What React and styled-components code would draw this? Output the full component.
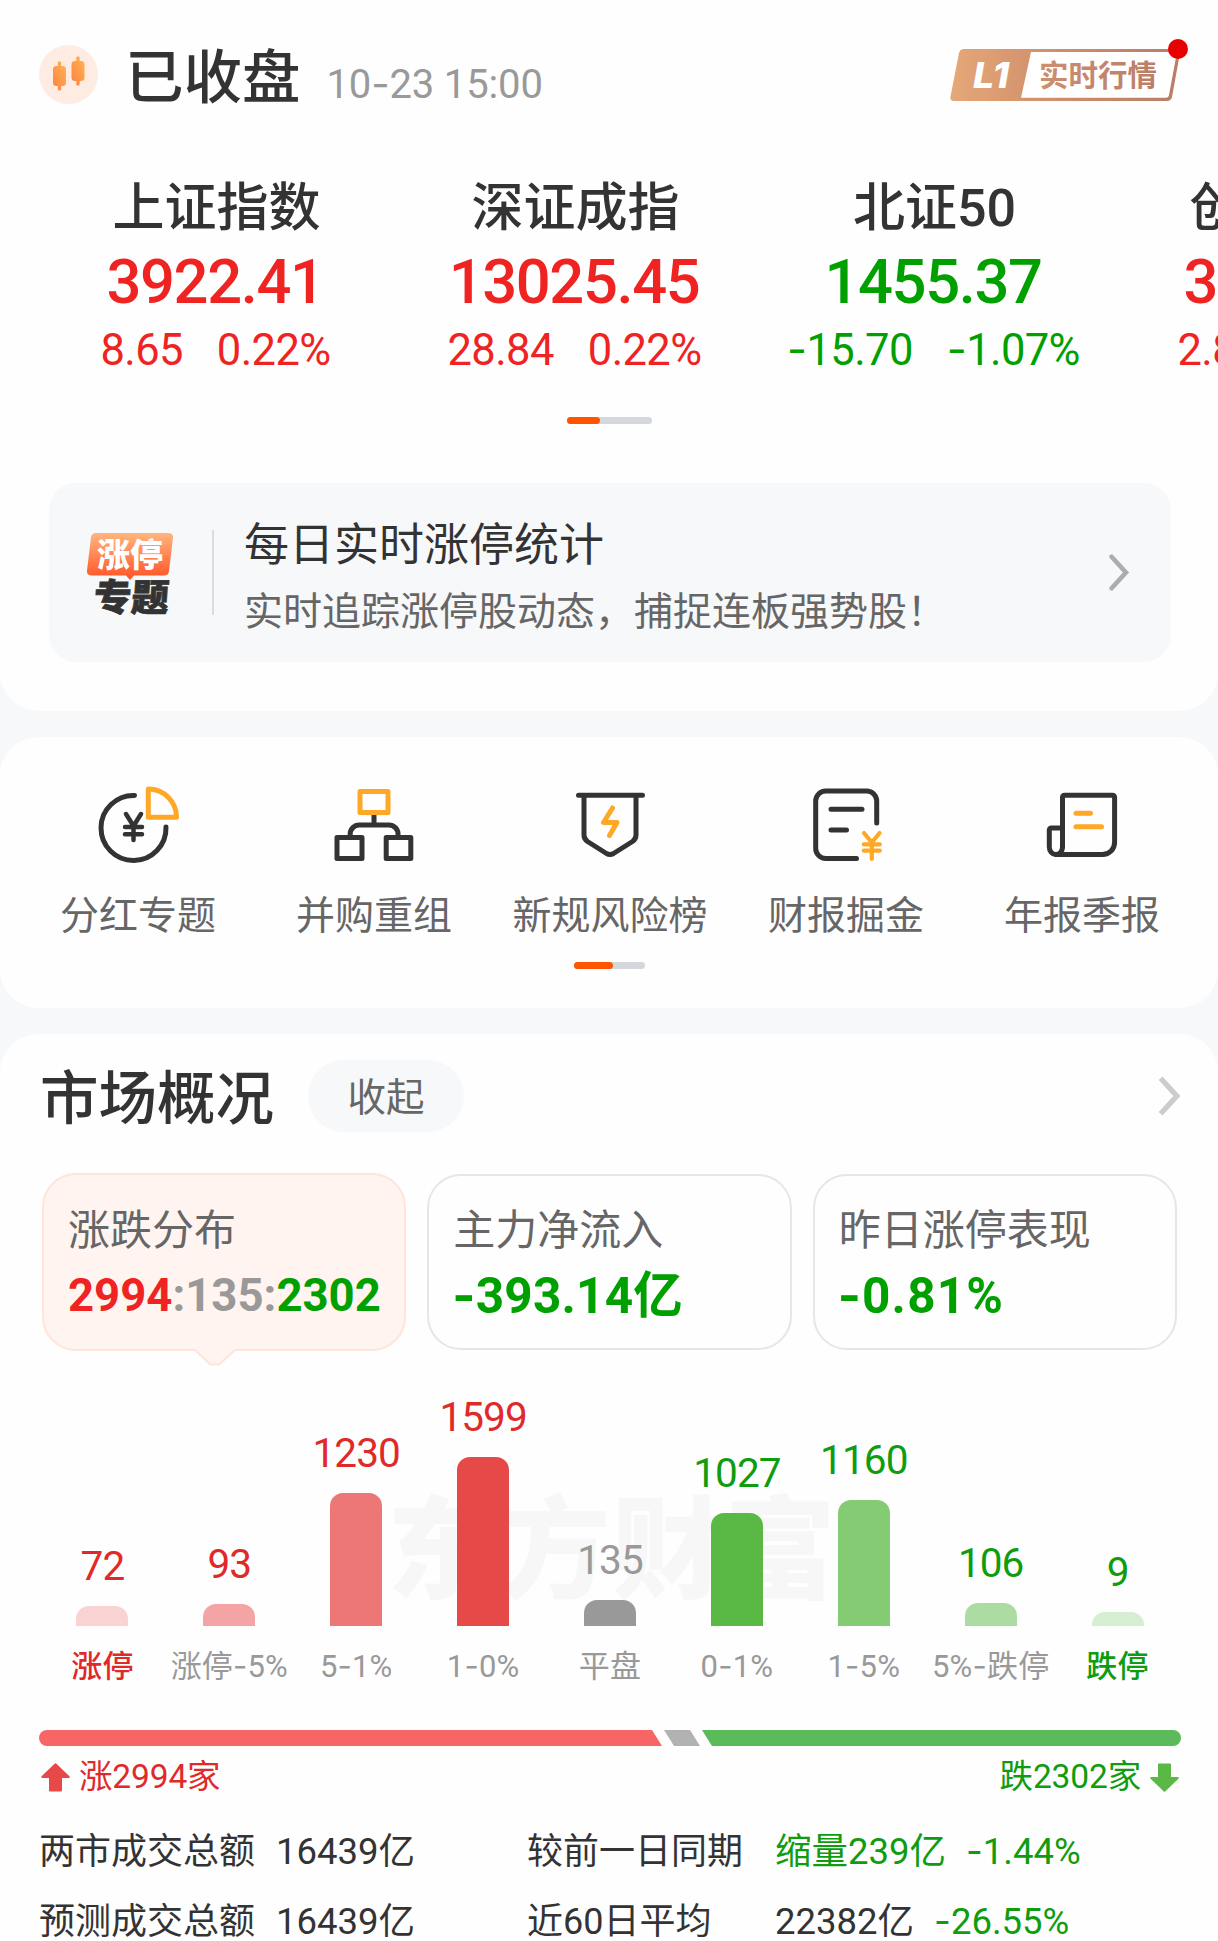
import React from 'react'
import styled, { createGlobalStyle } from 'styled-components'

const RED = '#f02323'
const GREEN = '#00a000'

const indexes = [
  { name: '上证指数', value: '3922.41', diff: '8.65', rate: '0.22%', up: true },
  { name: '深证成指', value: '13025.45', diff: '28.84', rate: '0.22%', up: true },
  { name: '北证50', value: '1455.37', diff: '-15.70', rate: '-1.07%', up: false },
  { name: '创业板指', value: '3062.16', diff: '2.84', rate: '0.09%', up: true },
]

const bars = [
  { label: '涨停', value: 72, height: 20, color: '#f9d2d2', text: '#e02a2a', strong: true },
  { label: '涨停-5%', value: 93, height: 22, color: '#f4a4a4', text: '#e02a2a' },
  { label: '5-1%', value: 1230, height: 133, color: '#ed7676', text: '#e02a2a' },
  { label: '1-0%', value: 1599, height: 169, color: '#e74848', text: '#e02a2a' },
  { label: '平盘', value: 135, height: 26, color: '#999999', text: '#999999' },
  { label: '0-1%', value: 1027, height: 113, color: '#5ab944', text: '#0f9c0f' },
  { label: '1-5%', value: 1160, height: 126, color: '#84cb74', text: '#0f9c0f' },
  { label: '5%-跌停', value: 106, height: 23, color: '#addca2', text: '#0f9c0f' },
  { label: '跌停', value: 9, height: 14, color: '#d6eed1', text: '#0f9c0f', strong: true },
]

const Num = ({ children }) => (
  <>
    {String(children).split(/(-)/).map((part, i) => (
      part === '-' ? <Hyphen key={i}>-</Hyphen> : part
    ))}
  </>
)

const DividendIcon = () => (
  <Icon viewBox="0 0 100 100">
    <path d="M46.5 19.5A32.5 32.5 0 1 0 78 51" />
    <path d="M38 38l7.5 12 7.5-12M45.5 50v14M37 51h17M37 58.3h17" strokeWidth="4.5" />
    <path d="M60.3 13v28.2h28.2A28.2 28.2 0 0 0 60.3 13z" stroke="#ffa726" />
  </Icon>
)

const MergeIcon = () => (
  <Icon viewBox="0 0 100 100">
    <path d="M50 38v11M26.2 60v-2a9 9 0 0 1 9-9H65a9 9 0 0 1 9 9v2" strokeLinecap="butt" />
    <rect x="13" y="61.5" width="25" height="21" />
    <rect x="62.2" y="61.5" width="24.6" height="21" />
    <rect x="36" y="15.5" width="28" height="21" stroke="#ffa726" />
  </Icon>
)

const RiskIcon = () => (
  <Icon viewBox="0 0 100 100">
    <path d="M18.5 19.3h64M24 19.3V59q0 4 3.5 6.5l19 12q3.5 2 7 0l19-12q3.5-2.5 3.5-6.5V19.3" />
    <path d="M52.5 32L43.5 46.5H57L49.5 59.5" stroke="#ffa726" />
  </Icon>
)

const ReportIcon = () => (
  <Icon viewBox="0 0 100 100">
    <path d="M80.7 47V25a10 10 0 0 0-10-10h-41a10 10 0 0 0-10 10v47.5a10 10 0 0 0 10 10h30.8" />
    <path d="M35 33.3h31M35 54h15.5" />
    <path d="M68 57l7.8 9.5 7.8-9.5M75.8 66.5V83M67.8 68.3h16M67.8 74.7h16" stroke="#ffa726" strokeWidth="4.2" />
  </Icon>
)

const AnnualIcon = () => (
  <Icon viewBox="0 0 100 100">
    <path d="M30.5 71V21.3a2 2 0 0 1 2-2h48.1a2 2 0 0 1 2 2v45.2a12 12 0 0 1-12 12H24" />
    <path d="M30.5 52H19.3a2 2 0 0 0-2 2v17a6.6 7.5 0 0 0 13.2 0" />
    <path d="M44 37.3h14.5M44 50.7h25.5" stroke="#ffa726" />
  </Icon>
)

const tools = [
  { label: '分红专题', icon: DividendIcon },
  { label: '并购重组', icon: MergeIcon },
  { label: '新规风险榜', icon: RiskIcon },
  { label: '财报掘金', icon: ReportIcon },
  { label: '年报季报', icon: AnnualIcon },
]

const CandleLogo = () => (
  <svg width="59" height="59" viewBox="0 0 59 59">
    <defs>
      <linearGradient id="candle" x1="0" y1="1" x2="1" y2="0">
        <stop offset="0" stopColor="#ff7f45" />
        <stop offset="1" stopColor="#ffb752" />
      </linearGradient>
    </defs>
    <circle cx="29.5" cy="29.5" r="29.5" fill="#feece3" />
    <g fill="url(#candle)">
      <path d="M17.5 21h1.3v-3a1.7 1.7 0 0 1 3.4 0v3h1.3a3.5 3.5 0 0 1 3.5 3.5v13a3.5 3.5 0 0 1-3.5 3.5h-1.3v3a1.7 1.7 0 0 1-3.4 0v-3h-1.3a3.5 3.5 0 0 1-3.5-3.5v-13a3.5 3.5 0 0 1 3.5-3.5z" />
      <path d="M36 16h1.3v-3a1.7 1.7 0 0 1 3.4 0v3H42a3.5 3.5 0 0 1 3.5 3.5v13A3.5 3.5 0 0 1 42 36h-1.3v3a1.7 1.7 0 0 1-3.4 0v-3H36a3.5 3.5 0 0 1-3.5-3.5v-13A3.5 3.5 0 0 1 36 16z" />
    </g>
  </svg>
)

const LevelBadge = () => (
  <svg width="240" height="64" viewBox="0 0 240 64">
    <defs>
      <linearGradient id="level" x1="0" y1="0" x2="1" y2="0">
        <stop offset="0" stopColor="#e5a878" />
        <stop offset="0.38" stopColor="#d2926d" />
        <stop offset="1" stopColor="#b97c67" />
      </linearGradient>
      <linearGradient id="levelText" x1="0" y1="0" x2="1" y2="0">
        <stop offset="0" stopColor="#cd8f6e" />
        <stop offset="1" stopColor="#bb7d67" />
      </linearGradient>
    </defs>
    <path d="M14 10h213q4 0 3 4l-8 44q-1 4-5 4H4q-4.5 0-3.5-4.5L9 14q1-4 5-4z" fill="url(#level)" />
    <path d="M81 13h146l-8 43q-.5 2.8-3 2.8H71z" fill="#fff" />
    <text x="23" y="49" fontSize="36" fontWeight="800" fontStyle="italic" fontFamily="Inter, sans-serif" fill="#fff" textLength="36" lengthAdjust="spacingAndGlyphs">L1</text>
    <text x="89" y="47" fontSize="29.5" fontWeight="700" fontFamily="'Noto Sans CJK SC', sans-serif" fill="url(#levelText)">实时行情</text>
    <circle cx="228" cy="10" r="10" fill="#e80000" />
  </svg>
)

const TopicLogo = () => (
  <svg width="86" height="84" viewBox="0 0 86 84">
    <defs>
      <linearGradient id="topic" x1="0" y1="0" x2="0" y2="1">
        <stop offset="0" stopColor="#ffb67e" />
        <stop offset="1" stopColor="#ff5226" />
      </linearGradient>
    </defs>
    <path d="M9 2h72q5.5 0 5 5l-4 33q-.5 4.5-5 4.5H47L43 49l-4-4.500H5q-5.500 0-5-5L4 6.500Q4.500 2 9 2z" fill="url(#topic)" />
    <text x="10" y="36" fontSize="33" fontWeight="900" fontFamily="'Noto Sans CJK SC', sans-serif" fill="#fff">涨停</text>
    <text x="11.5" y="80" fontSize="37.5" fontWeight="900" fontFamily="'Noto Sans CJK SC', sans-serif" fill="#333" stroke="#333" strokeWidth="0.8" transform="skewX(-4)">专题</text>
  </svg>
)

const Chevron = ({ width, height, color, cap }) => (
  <svg width={width} height={height} viewBox="0 0 22 40">
    <path d="M3 3l15.5 17L3 37" fill="none" stroke={color} strokeWidth="5" strokeLinecap={cap} />
  </svg>
)

const Arrow = ({ down }) => (
  <ArrowSvg viewBox="0 0 29 29" $down={down}>
    <path
      d="M14.5 1.2L27.7 14H20v13.5H9V14H1.3z"
      fill={down ? '#5ab944' : '#e74848'}
      stroke={down ? '#5ab944' : '#e74848'}
      strokeWidth="2"
      strokeLinejoin="round"
    />
  </ArrowSvg>
)

const App = () => {
  return (
    <Container>
      <GlobalStyle />
      <TopPanel>
        <Header>
          <CandleLogo />
          <HeaderTitle>
            <Status>已收盘</Status>
            <Time><Num>10-23 15:00</Num></Time>
          </HeaderTitle>
          <LevelBadge />
        </Header>
        <IndexList>
          {indexes.map((item) => (
            <IndexItem key={item.name} $up={item.up}>
              <IndexName>{item.name}</IndexName>
              <IndexValue>{item.value}</IndexValue>
              <IndexChange>
                <span><Num>{item.diff}</Num></span>
                <span><Num>{item.rate}</Num></span>
              </IndexChange>
            </IndexItem>
          ))}
        </IndexList>
        <Pager $width="85px" $top="38px"><PagerThumb $width="33px" /></Pager>
        <Notice>
          <TopicLogo />
          <NoticeDivider />
          <NoticeText>
            <NoticeTitle>每日实时涨停统计</NoticeTitle>
            <NoticeSub>实时追踪涨停股动态，捕捉连板强势股！</NoticeSub>
          </NoticeText>
          <Chevron width="22" height="37" color="#adadad" cap="round" />
        </Notice>
      </TopPanel>

      <ToolPanel>
        <ToolList>
          {tools.map(({ label, icon: ToolIcon }) => (
            <Tool key={label}>
              <ToolIcon />
              <ToolLabel>{label}</ToolLabel>
            </Tool>
          ))}
        </ToolList>
        <Pager $width="71px" $top="21px"><PagerThumb $width="39px" /></Pager>
      </ToolPanel>

      <MarketPanel>
        <MarketHeader>
          <MarketTitle>市场概况</MarketTitle>
          <Fold>收起</Fold>
          <Chevron width="24" height="42" color="#cccccc" cap="butt" />
        </MarketHeader>

        <Tabs>
          <ActiveTab>
            <TabLabel>涨跌分布</TabLabel>
            <TabRatio>
              <Up>2994</Up>:135:<Down>2302</Down>
            </TabRatio>
            <Pointer viewBox="0 0 44 17">
              <path d="M0 0H44L25.5 15.5h-7z" fill="#fff4ef" />
              <path d="M0 1h2L17.5 15.5h8.5L42 1h2" fill="none" stroke="#fde5da" strokeWidth="2" />
            </Pointer>
          </ActiveTab>
          <Tab>
            <TabLabel>主力净流入</TabLabel>
            <TabValue><Num>-393.14亿</Num></TabValue>
          </Tab>
          <Tab>
            <TabLabel>昨日涨停表现</TabLabel>
            <TabValue $spacing="1.2px"><Num>-0.81%</Num></TabValue>
          </Tab>
        </Tabs>

        <Chart>
          <Watermark>东方财富</Watermark>
          {bars.map((bar) => (
            <Column key={bar.label}>
              <ColumnValue $color={bar.text}>{bar.value}</ColumnValue>
              <Bar $color={bar.color} style={{ height: bar.height }} />
              <ColumnLabel $color={bar.strong ? bar.text : '#999999'} $strong={bar.strong}>
                <Num>{bar.label}</Num>
              </ColumnLabel>
            </Column>
          ))}
        </Chart>

        <Ratio>
          <RatioUp />
          <RatioFlat />
          <RatioDown />
        </Ratio>
        <RatioText>
          <RatioLabel $color="#e02a2a"><Arrow />涨2994家</RatioLabel>
          <RatioLabel $color="#0f9c0f">跌2302家<Arrow down /></RatioLabel>
        </RatioText>

        <Stats>
          <StatName>两市成交总额</StatName>
          <span>16439亿</span>
          <StatName>较前一日同期</StatName>
          <StatValue>
            <Fall>缩量239亿</Fall>
            <Fall><Num>-1.44%</Num></Fall>
          </StatValue>
          <StatName>预测成交总额</StatName>
          <span>16439亿</span>
          <StatName>近60日平均</StatName>
          <StatValue>
            <span>22382亿</span>
            <Fall><Num>-26.55%</Num></Fall>
          </StatValue>
        </Stats>
      </MarketPanel>
    </Container>
  )
}

export default App

const GlobalStyle = createGlobalStyle`
  * {
    box-sizing: border-box;
  }

  body {
    margin: 0;
    background: #f6f8fa;
  }

  svg {
    display: block;
    flex-shrink: 0;
  }
`;

const Container = styled.div`
  width: 1218px;
  height: 1941px;
  overflow: hidden;
  display: flex;
  flex-direction: column;
  gap: 26px;
  background: #f6f8fa;
  font-family: Roboto, "Noto Sans CJK SC", sans-serif;
  color: #333333;
  white-space: nowrap;
`;

const Hyphen = styled.span`
  font-family: Inter, sans-serif;
  line-height: 1;
`;

const Panel = styled.section`
  background: #fefefe;
  border-radius: 38px;
  flex-shrink: 0;
`;

const TopPanel = styled(Panel)`
  border-radius: 0 0 38px 38px;
  padding-bottom: 49px;
`;

const Header = styled.header`
  height: 149px;
  padding: 0 28px 0 39px;
  display: flex;
  align-items: center;

  & > svg:last-child {
    margin-top: -8px;
  }
`;

const HeaderTitle = styled.div`
  flex: 1;
  display: flex;
  align-items: baseline;
  gap: 26px;
  margin: 7px 0 0 27px;
`;

const Status = styled.h1`
  margin: 0;
  font-size: 58.5px;
  line-height: 84px;
  font-weight: 500;
`;

const Time = styled.span`
  font-size: 40px;
  letter-spacing: -0.15px;
  color: #999999;
`;

const IndexList = styled.div`
  display: flex;
  padding: 27px 0 0 37px;
  overflow: hidden;
`;

const IndexItem = styled.div`
  width: 359px;
  flex-shrink: 0;
  text-align: center;
  color: ${props => (props.$up ? RED : GREEN)};
`;

const IndexName = styled.div`
  font-size: 52px;
  line-height: 66px;
  font-weight: 500;
  color: #333333;
`;

const IndexValue = styled.div`
  margin-right: 3px;
  font-size: 61.5px;
  line-height: 81px;
  font-weight: 500;
  letter-spacing: -1.4px;
`;

const IndexChange = styled.div`
  display: flex;
  justify-content: center;
  gap: 34px;
  margin-right: 2px;
  font-size: 43.5px;
  line-height: 56px;
  letter-spacing: -0.6px;
`;

const Pager = styled.div`
  width: ${props => props.$width};
  height: 7px;
  margin: ${props => props.$top} auto 0;
  border-radius: 4px;
  background: #d4d7dc;
`;

const PagerThumb = styled.div`
  width: ${props => props.$width};
  height: 7px;
  border-radius: 4px;
  background: #ff5500;
`;

const Notice = styled.div`
  height: 179px;
  margin: 59px 47px 0 49px;
  padding: 0 41px 0 38px;
  display: flex;
  align-items: center;
  border-radius: 27px;
  background: #f7f8fa;
`;

const NoticeDivider = styled.div`
  width: 2px;
  height: 85px;
  margin: 0 30px 0 39px;
  background: #dddddd;
`;

const NoticeText = styled.div`
  flex: 1;
  display: flex;
  flex-direction: column;
  gap: 8px;
  padding-top: 11px;
`;

const NoticeTitle = styled.div`
  font-size: 45px;
  line-height: 60px;
`;

const NoticeSub = styled.div`
  font-size: 39px;
  line-height: 56px;
  color: #666666;
`;

const ToolPanel = styled(Panel)`
  padding: 39px 0;
`;

const ToolList = styled.div`
  display: flex;
  padding: 0 18px 0 20px;
`;

const Tool = styled.div`
  flex: 1;
  display: flex;
  flex-direction: column;
  align-items: center;
  gap: 15px;
`;

const Icon = styled.svg.attrs({
  fill: 'none',
  stroke: '#333333',
  strokeWidth: 5,
  strokeLinecap: 'round',
  strokeLinejoin: 'round',
})`
  width: 100px;
  height: 100px;
`;

const ToolLabel = styled.div`
  font-size: 39px;
  line-height: 50px;
  color: #666666;
`;

const MarketPanel = styled(Panel)`
  padding: 26px 37px 0 39px;
  border-radius: 38px 38px 0 0;
`;

const MarketHeader = styled.div`
  height: 72px;
  display: flex;
  align-items: center;

  & > svg {
    margin-left: auto;
  }
`;

const MarketTitle = styled.h2`
  margin: 5px 34px 0 1px;
  font-size: 58.5px;
  line-height: 72px;
  font-weight: 500;
`;

const Fold = styled.button`
  width: 156px;
  height: 72px;
  padding: 0 0 4px;
  border: none;
  border-radius: 36px;
  background: #f7f8fa;
  font-family: inherit;
  font-size: 38.5px;
  color: #666666;
`;

const Tabs = styled.div`
  display: flex;
  gap: 21px;
  margin: 41px 4px 0 3px;
`;

const Tab = styled.div`
  flex: 1 1 0;
  min-width: 0;
  height: 176px;
  margin-top: 1px;
  padding: 27px 0 0 24px;
  border: 2px solid #e6e6e6;
  border-radius: 34px;
`;

const ActiveTab = styled(Tab)`
  position: relative;
  height: 178px;
  margin-top: 0;
  padding-top: 28px;
  border-color: #fde5da;
  background: #fff4ef;
`;

const Pointer = styled.svg`
  position: absolute;
  left: 149px;
  bottom: -17px;
  width: 44px;
  height: 17px;
`;

const TabLabel = styled.div`
  font-size: 42px;
  line-height: 56px;
  color: #666666;
`;

const TabValue = styled.div`
  margin: 7px 0 0 -1px;
  font-size: 49.5px;
  line-height: 60px;
  font-weight: 700;
  letter-spacing: ${props => props.$spacing || '0.2px'};
  color: ${GREEN};
`;

const TabRatio = styled(TabValue)`
  margin-left: 0;
  font-size: 45.5px;
  letter-spacing: 0;
  color: #999999;
`;

const Up = styled.span`
  color: ${RED};
`;

const Down = styled.span`
  color: ${GREEN};
`;

const Chart = styled.div`
  position: relative;
  height: 302px;
  margin-top: 34px;
  display: flex;
  align-items: flex-end;
`;

const Watermark = styled.div`
  position: absolute;
  left: 348px;
  top: 102px;
  font-size: 111px;
  line-height: 130px;
  font-weight: 900;
  letter-spacing: 1.5px;
  color: #f7f7f7;
`;

const Column = styled.div`
  position: relative;
  width: 126.9px;
  flex-shrink: 0;
  display: flex;
  flex-direction: column;
  align-items: center;
`;

const ColumnValue = styled.div`
  margin-bottom: 16px;
  font-size: 40.5px;
  line-height: 48px;
  letter-spacing: -0.9px;
  color: ${props => props.$color};
`;

const Bar = styled.div`
  width: 52px;
  border-radius: 13px 13px 0 0;
  background: ${props => props.$color};
`;

const ColumnLabel = styled.div`
  margin-top: 21px;
  font-size: 31px;
  line-height: 40px;
  font-weight: ${props => (props.$strong ? 500 : 400)};
  letter-spacing: 0.2px;
  color: ${props => props.$color};
`;

const Ratio = styled.div`
  display: flex;
  height: 16px;
  margin-top: 43px;
  border-radius: 8px;
  overflow: hidden;
`;

const RatioUp = styled.div`
  width: 623px;
  background: #f76565;
  clip-path: polygon(0 0, calc(100% - 10px) 0, 100% 100%, 0 100%);
`;

const RatioFlat = styled.div`
  width: 36px;
  margin: 0 2px;
  background: #b2b2b2;
  clip-path: polygon(0 0, calc(100% - 10px) 0, 100% 100%, 10px 100%);
`;

const RatioDown = styled.div`
  flex: 1;
  background: #5bbb5b;
  clip-path: polygon(0 0, 100% 0, 100% 100%, 10px 100%);
`;

const RatioText = styled.div`
  display: flex;
  justify-content: space-between;
  margin-top: 9px;
  padding: 0 2px;
`;

const RatioLabel = styled.div`
  display: flex;
  align-items: center;
  gap: 9px;
  font-size: 33.5px;
  line-height: 44px;
  letter-spacing: -0.15px;
  color: ${props => props.$color};
`;

const ArrowSvg = styled.svg`
  width: 29px;
  height: 29px;
  transform: ${props => (props.$down ? 'rotate(180deg)' : 'none')};
`;

const Stats = styled.div`
  display: grid;
  grid-template-columns: 237px 251px 248px auto;
  align-items: baseline;
  margin-top: 18px;
  font-size: 36.5px;
  line-height: 69px;
`;

const StatName = styled.span`
  font-size: 36px;
`;

const StatValue = styled.div`
  display: flex;
  gap: 20px;
`;

const Fall = styled.span`
  color: #0f9c0f;
`;
